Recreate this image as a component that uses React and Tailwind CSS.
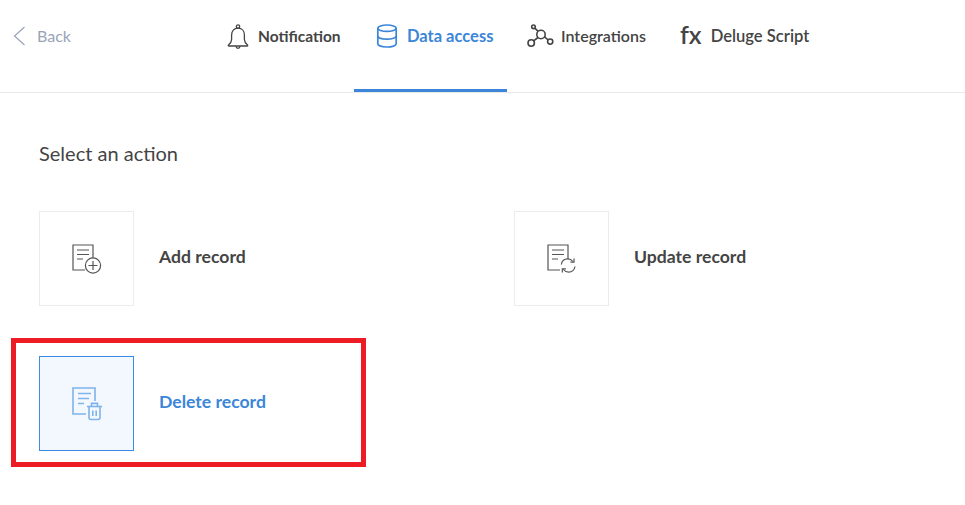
const font = { fontFamily: '"Lato", "Open Sans", sans-serif' };

function BellIcon() {
  return (
    <svg width="22" height="26" viewBox="0 0 22 26" fill="none" stroke="currentColor" strokeWidth="1.3" strokeLinejoin="round">
      <circle cx="11" cy="2.6" r="1.7" />
      <path d="M11 4.2c-4 0-6.4 2.8-6.4 6.8v4.6c0 2.3-1.2 3.8-3.1 5.4-.4.4-.2 1 .4 1h18.2c.6 0 .8-.6.4-1-1.9-1.6-3.1-3.1-3.1-5.4V11c0-4-2.4-6.8-6.4-6.8z" />
      <path d="M9 22.4c.2 1.2 1 1.9 2 1.9s1.8-.7 2-1.9" />
    </svg>
  );
}

function DatabaseIcon() {
  return (
    <svg width="22" height="24" viewBox="0 0 22 24" fill="none" stroke="currentColor" strokeWidth="1.7">
      <ellipse cx="11" cy="4.2" rx="9.2" ry="3.2" />
      <path d="M1.8 4.2v15.6c0 1.8 4.1 3.2 9.2 3.2s9.2-1.4 9.2-3.2V4.2" />
      <path d="M1.8 12c0 1.8 4.1 3.2 9.2 3.2s9.2-1.4 9.2-3.2" />
    </svg>
  );
}

function NodesIcon() {
  return (
    <svg width="27" height="24" viewBox="0 0 27 24" fill="none" stroke="currentColor" strokeWidth="1.6">
      <circle cx="6.5" cy="2.8" r="1.8" />
      <circle cx="14" cy="10.5" r="4.2" />
      <circle cx="4.2" cy="19" r="3.2" />
      <circle cx="23.2" cy="17.6" r="2.6" />
      <path d="M7.8 4.2l3.4 3.2M11 13.5l-4.4 3.4M17.6 12.8l3.6 3.2" />
    </svg>
  );
}

function RecordBase() {
  return (
    <>
      <path d="M21 15V1H1v25h12" />
      <path d="M5 6h12M5 10.5h12M5 15h6" />
    </>
  );
}

function AddRecordIcon() {
  return (
    <svg width="30" height="30" viewBox="0 0 30 30" fill="none" stroke="currentColor" strokeWidth="1.2">
      <RecordBase />
      <circle cx="21" cy="21.5" r="7.6" fill="#fff" />
      <path d="M21 17v9M16.5 21.5h9" />
    </svg>
  );
}

function UpdateRecordIcon() {
  return (
    <svg width="30" height="30" viewBox="0 0 30 30" fill="none" stroke="currentColor" strokeWidth="1.2">
      <RecordBase />
      <path d="M14.3 20.5c.6-3.4 3.3-5.6 6.4-5.6 2.2 0 4 1 5.2 2.6" />
      <path d="M27 14.6v3.6h-3.6" />
      <path d="M28 22.5c-.6 3.4-3.3 5.6-6.4 5.6-2.2 0-4-1-5.2-2.6" />
      <path d="M15.3 28.4v-3.6h3.6" />
    </svg>
  );
}

function DeleteRecordIcon() {
  return (
    <svg width="30" height="34" viewBox="0 0 30 34" fill="none" stroke="currentColor" strokeWidth="1.6">
      <path d="M23 14V1H1v26h13" />
      <path d="M6 6.5h13M6 11.5h11M6 16.5h6" />
      <path d="M15 19.5h15" />
      <path d="M19.5 19v-2.6h6V19" />
      <path d="M17 20v10.5c0 1.2.7 2 2 2h7c1.3 0 2-.8 2-2V20" />
      <path d="M20.8 23.5v5.5M24.2 23.5v5.5" />
    </svg>
  );
}

function ActionCard({ label, icon, active }) {
  return (
    <div className="flex items-center gap-[25px]">
      <div
        className={
          active
            ? 'flex h-[95px] w-[95px] items-center justify-center border border-[color:#3b8ae6] bg-[#f3f8fe] text-[#7fb3ec]'
            : 'flex h-[95px] w-[95px] items-center justify-center border border-[#ececec] bg-white text-[#555555]'
        }
      >
        {icon}
      </div>
      <span className={active ? 'pb-[3px] text-[17.6px] font-bold text-[#3b86d8]' : 'pb-[3px] text-[17.6px] font-bold text-[#444444]'}>{label}</span>
    </div>
  );
}

export default function App() {
  return (
    <div className="h-[505px] w-[965px] overflow-hidden bg-white" style={font}>
      <div className="flex h-[93px] border-b border-[#e9e9e9]">
        <div className="flex w-[200px] items-center gap-[11px] pb-[20px] pl-[13px] text-[#99a3b8]">
          <svg width="13" height="20" viewBox="0 0 13 20" fill="none" stroke="currentColor" strokeWidth="1.2">
            <path d="M11.5 1L1.5 10l10 9" />
          </svg>
          <span className="text-[16px]">Back</span>
        </div>
        <div className="flex h-[92px] w-[154px] items-center gap-[9px] pb-[19px] pl-[27px] text-[#444444]">
          <BellIcon />
          <span className="text-[15.5px] font-bold">Notification</span>
        </div>
        <div className="flex h-[92px] w-[153px] items-center gap-[9px] border-b-[3px] border-[#3b86d8] pb-[17px] pl-[22px] text-[#3b86d8]">
          <DatabaseIcon />
          <span className="text-[16.5px] font-bold">Data access</span>
        </div>
        <div className="flex h-[92px] w-[173px] items-center gap-[7px] pb-[20px] pl-[20px] text-[#444444]">
          <NodesIcon />
          <span className="text-[16px] font-semibold">Integrations</span>
        </div>
        <div className="flex h-[92px] items-center gap-[9px] pb-[20px] text-[#444444]">
          <span className="pb-[3px] text-[25px] font-semibold leading-none">fx</span>
          <span className="text-[16.6px] font-semibold">Deluge Script</span>
        </div>
      </div>

      <div className="pl-[39px] pt-[48px]">
        <h2 className="text-[20px] leading-[24px] text-[#444444]">Select an action</h2>
        <div className="mt-[46px] grid w-[925px] grid-cols-[475px_1fr] gap-y-[50px]">
          <ActionCard label="Add record" icon={<AddRecordIcon />} />
          <ActionCard label="Update record" icon={<UpdateRecordIcon />} />
          <div className="relative">
            <ActionCard label="Delete record" icon={<DeleteRecordIcon />} active />
            <div className="absolute left-[-28px] top-[-18px] h-[129px] w-[355px] border-[5px] border-[#ed1c24]" />
          </div>
        </div>
      </div>
    </div>
  );
}
